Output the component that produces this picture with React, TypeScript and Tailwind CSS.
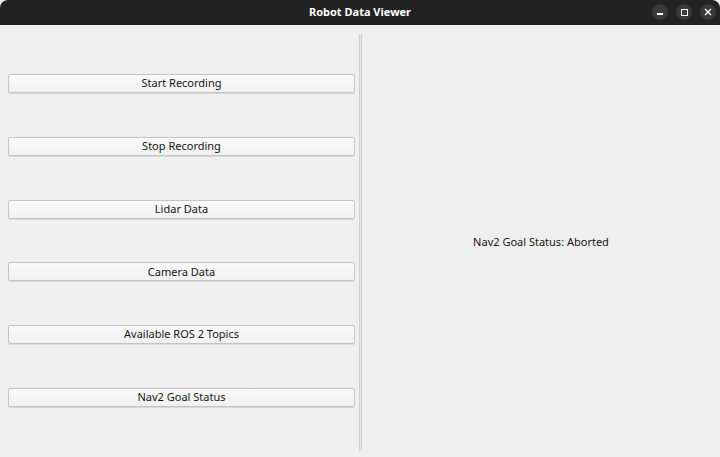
import React from "react";

const labels = [
  "Start Recording",
  "Stop Recording",
  "Lidar Data",
  "Camera Data",
  "Available ROS 2 Topics",
  "Nav2 Goal Status",
];

export default function App() {
  return (
    <div
      className="w-[720px] h-[457px] flex flex-col bg-[#efefef] overflow-hidden"
      style={{ fontFamily: '"Noto Sans", "Open Sans", sans-serif' }}
    >
      <div className="h-[25px] bg-[#222222] rounded-t-[8px] flex items-center relative shrink-0">
        <div className="flex-1 text-center text-white text-[11px] font-bold">Robot Data Viewer</div>
        <div className="absolute right-[4px] top-[4px] flex gap-[8px]">
          <div className="w-[16px] h-[16px] rounded-full bg-[#3a3a3a] flex items-center justify-center">
            <div className="w-[6px] h-[1.5px] bg-white mt-[4px]" />
          </div>
          <div className="w-[16px] h-[16px] rounded-full bg-[#3a3a3a] flex items-center justify-center">
            <div className="w-[7px] h-[7px] border border-white" />
          </div>
          <div className="w-[16px] h-[16px] rounded-full bg-[#3a3a3a] flex items-center justify-center">
            <svg width="8" height="8" viewBox="0 0 8 8">
              <path d="M1 1L7 7M7 1L1 7" stroke="white" strokeWidth="1.3" />
            </svg>
          </div>
        </div>
      </div>
      <div className="flex flex-1">
        <div className="w-[359px] flex flex-col pt-[49px] pl-[8px] pr-[4px] gap-[43.8px]">
          {labels.map((l) => (
            <button
              key={l}
              className="h-[19px] w-[347px] border border-[#c4c4c4] rounded-[2px] bg-gradient-to-b from-[#fafafa] to-[#f0f0f0] shadow-[0_1px_0_#d8d8d8] text-[11px] text-[#151515] flex items-center justify-center"
            >
              {l}
            </button>
          ))}
        </div>
        <div className="pt-[9px] pb-[6px] flex">
          <div className="w-[3px] border-x border-[#cfcfcf] bg-[#e4e4e4]" />
        </div>
        <div className="flex-1 flex items-center justify-center text-[11px] text-[#151515] pt-[3px]">
          Nav2 Goal Status: Aborted
        </div>
      </div>
    </div>
  );
}
